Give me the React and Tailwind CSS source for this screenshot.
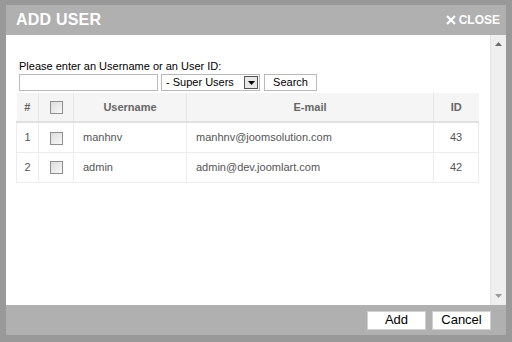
import React from 'react';

const Check = () => (
  <span className="inline-block w-[13px] h-[13px] border border-[#8f8f8f] bg-gradient-to-br from-[#dcdcdc] to-[#f8f8f8] align-middle" />
);

const users = [
  { id: 43, name: 'manhnv', email: 'manhnv@joomsolution.com' },
  { id: 42, name: 'admin', email: 'admin@dev.joomlart.com' },
];

export default function App() {
  return (
    <div className="w-[512px] h-[342px] bg-[#999999] pl-[6px] pt-[5px] font-['Liberation_Sans',Arial,sans-serif]">
      <div className="w-[500px] h-[330px] flex flex-col">
        {/* Header */}
        <div className="h-[30px] bg-[#b0b0b0] flex items-center justify-between px-[10px]">
          <span className="text-white font-bold text-[16px] tracking-[0.2px]">ADD USER</span>
          <span className="flex items-center gap-[3px] text-white font-bold text-[12px] mr-[-4px]">
            <svg width="10" height="10" viewBox="0 0 10 10">
              <path d="M1 1L9 9M9 1L1 9" stroke="white" strokeWidth="2.2" />
            </svg>
            CLOSE
          </span>
        </div>

        {/* Body */}
        <div className="flex h-[270px] bg-white">
          <div className="flex-1 pl-[10px] pt-[25px] text-[11px] text-[#000]">
            <div className="pl-[3px] leading-[13px] mb-[1px]">Please enter an Username or an User ID:</div>
            <div className="flex items-center gap-[3px] pl-[3px] h-[17px]">
              <div className="w-[139px] h-[17px] border border-[#b9b9b9]" />
              <div className="w-[99px] h-[17px] border border-[#b9b9b9] flex items-center justify-between pl-[4px] pr-[1px]">
                <span className="text-[11px]">- Super Users</span>
                <span className="w-[14px] h-[13px] border border-[#555] bg-[#e8e8e8] flex items-center justify-center">
                  <svg width="7" height="4" viewBox="0 0 7 4"><path d="M0 0H7L3.5 4Z" fill="#000" /></svg>
                </span>
              </div>
              <div className="w-[53px] h-[17px] border border-[#b9b9b9] flex items-center justify-center ml-[1px]">Search</div>
            </div>
            <table className="mt-[2px] w-[463px] border-collapse text-[11px]">
              <thead>
                <tr className="bg-[#f5f5f5] h-[29px] text-[#666] font-bold border-b-2 border-[#e0e0e0]">
                  <th className="w-[22px] border-r border-[#e6e6e6] font-bold">#</th>
                  <th className="w-[35px] border-r border-[#e6e6e6]"><Check /></th>
                  <th className="w-[113px] border-r border-[#e6e6e6] font-bold">Username</th>
                  <th className="w-[247px] border-r border-[#e6e6e6] font-bold">E-mail</th>
                  <th className="font-bold">ID</th>
                </tr>
              </thead>
              <tbody className="text-[#555]">
                {users.map((u, i) => (
                  <tr key={u.id} className="h-[30px] border border-[#ececec]">
                    <td className="text-center border-r border-[#ececec]">{i + 1}</td>
                    <td className="text-center border-r border-[#ececec]"><Check /></td>
                    <td className="pl-[9px] border-r border-[#ececec]">{u.name}</td>
                    <td className="pl-[9px] border-r border-[#ececec]">{u.email}</td>
                    <td className="text-center">{u.id}</td>
                  </tr>
                ))}
              </tbody>
            </table>
          </div>
          {/* Scrollbar */}
          <div className="w-[16px] bg-[#efefef] border-l border-[#e4e4e4] flex flex-col justify-between items-center py-[7px]">
            <svg width="7" height="4" viewBox="0 0 7 4"><path d="M0 4H7L3.5 0Z" fill="#6d6d6d" /></svg>
            <svg width="7" height="4" viewBox="0 0 7 4"><path d="M0 0H7L3.5 4Z" fill="#9a9a9a" /></svg>
          </div>
        </div>

        {/* Footer */}
        <div className="h-[30px] bg-[#b0b0b0] flex items-center justify-end gap-[6px] pr-[15px]">
          <div className="w-[59px] h-[19px] bg-white border border-[#d0d0d0] flex items-center justify-center text-[13px] text-black">Add</div>
          <div className="w-[59px] h-[19px] bg-white border border-[#d0d0d0] flex items-center justify-center text-[13px] text-black">Cancel</div>
        </div>
      </div>
    </div>
  );
}
